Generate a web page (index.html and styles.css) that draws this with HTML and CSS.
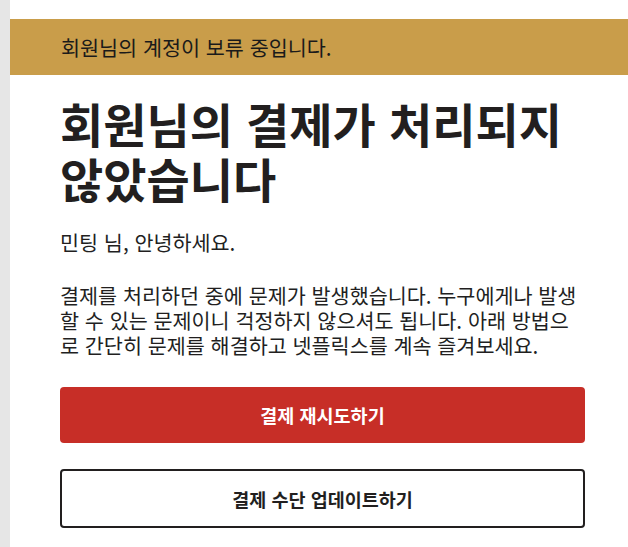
FILE: index.html
```html
<!DOCTYPE html>
<html lang="ko">
<head>
<meta charset="utf-8">
<title>결제 보류</title>
<link rel="stylesheet" href="styles.css">
</head>
<body>
<div class="rail"></div>
<div class="page">
  <div class="banner">회원님의 계정이 보류 중입니다.</div>
  <main class="content">
    <h1 class="title">회원님의 결제가 처리되지 않았습니다</h1>
    <p class="greeting">민팅 님, 안녕하세요.</p>
    <p class="message">결제를 처리하던 중에 문제가 발생했습니다. 누구에게나 발생할 수 있는 문제이니 걱정하지 않으셔도 됩니다. 아래 방법으로 간단히 문제를 해결하고 넷플릭스를 계속 즐겨보세요.</p>
    <div class="actions">
      <button class="btn btn-primary">결제 재시도하기</button>
      <button class="btn btn-outline">결제 수단 업데이트하기</button>
    </div>
  </main>
</div>
</body>
</html>
```

FILE: styles.css
```css
html, body {
  margin: 0;
  padding: 0;
  height: 100%;
}
body {
  display: flex;
  background: #ffffff;
  font-family: "Noto Sans CJK KR", "Noto Sans", sans-serif;
  color: #221f1f;
  overflow: hidden;
}
.rail {
  width: 10px;
  flex: 0 0 10px;
  background: #e6e6e6;
}
.page {
  flex: 1;
  padding-top: 19px;
}
.banner {
  height: 56px;
  box-sizing: border-box;
  background: #c99d4a;
  padding-left: 51px;
  display: flex;
  align-items: center;
  font-size: 20.7px;
  color: #1a1a1a;
}
.content {
  padding: 0 43px 0 50px;
}
.title {
  margin: 20px 0 0;
  font-size: 47px;
  line-height: 55px;
  font-weight: 700;
  color: #221f1f;
}
.greeting {
  margin: 25px 0 0;
  font-size: 20.7px;
  line-height: 25px;
}
.message {
  margin: 28px 0 0;
  font-size: 20.7px;
  line-height: 25px;
}
.actions {
  margin-top: 29px;
  display: flex;
  flex-direction: column;
  gap: 26px;
}
.btn {
  display: block;
  width: 100%;
  border-radius: 4px;
  font-family: inherit;
  font-size: 18.5px;
  font-weight: 700;
  cursor: pointer;
}
.btn-primary {
  height: 56px;
  background: #c72e27;
  border: none;
  color: #ffffff;
}
.btn-outline {
  height: 59px;
  background: #ffffff;
  border: 2px solid #221f1f;
  color: #221f1f;
}
```
